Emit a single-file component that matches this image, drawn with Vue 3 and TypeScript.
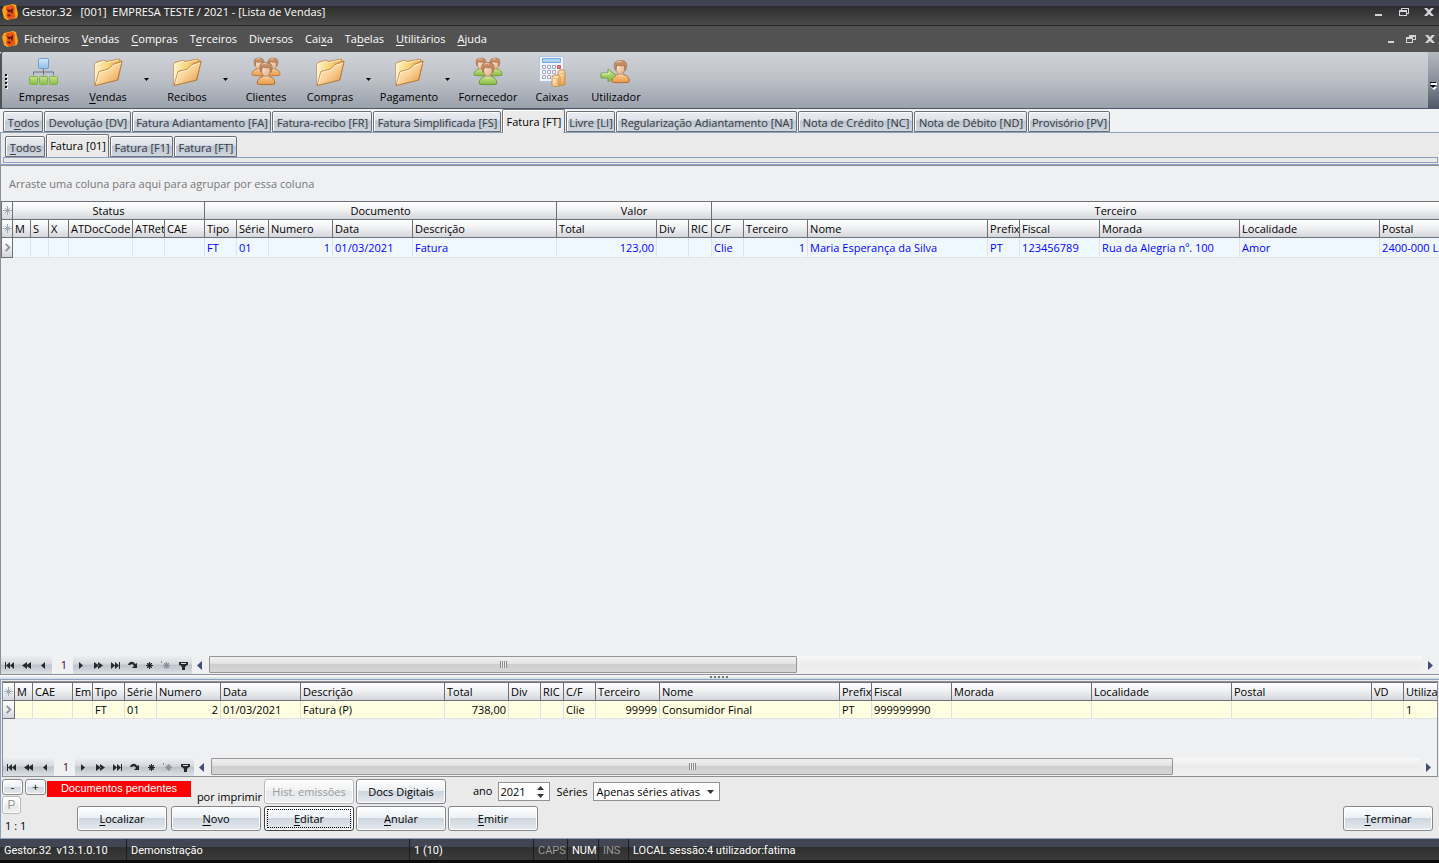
<script setup lang="ts">
import { h, ref } from 'vue'

/* Label whose "&" marks the accelerator letter, shown underlined. */
const Label = (props: { text: string }) => {
  const at = props.text.indexOf('&')
  if (at < 0) return h('span', props.text)
  return h('span', [props.text.slice(0, at), h('u', props.text[at + 1]), props.text.slice(at + 2)])
}
Label.props = ['text']

interface Tab { text: string; width: number; active?: boolean }
interface Column { title: string; width: number; value?: string; right?: boolean }
interface Tool { text: string; icon: string; menu?: boolean; tone?: string }

const menus = ['Ficheiros', '&Vendas', '&Compras', 'T&erceiros', 'Diversos', 'Cai&xa', 'Ta&belas', '&Utilitários', '&Ajuda']

const tools: Tool[] = [
  { text: 'Empresas', icon: 'org' },
  { text: '&Vendas', icon: 'folder', menu: true },
  { text: 'Recibos', icon: 'folder', menu: true },
  { text: 'Clientes', icon: 'people', tone: 'amber' },
  { text: 'Compras', icon: 'folder', menu: true },
  { text: 'Pagamento', icon: 'folder', menu: true },
  { text: 'Fornecedor', icon: 'people', tone: 'green' },
  { text: 'Caixas', icon: 'cash' },
  { text: 'Utilizador', icon: 'user' },
]

const typeTabs: Tab[] = [
  { text: 'T&odos', width: 40 },
  { text: 'Devolução [DV]', width: 87 },
  { text: 'Fatura Adiantamento [FA]', width: 139 },
  { text: 'Fatura-recibo [FR]', width: 100 },
  { text: 'Fatura Simplificada [FS]', width: 128 },
  { text: 'Fatura [FT]', width: 63, active: true },
  { text: 'Livre [LI]', width: 49 },
  { text: 'Regularização Adiantamento [NA]', width: 181 },
  { text: 'Nota de Crédito [NC]', width: 115 },
  { text: 'Nota de Débito [ND]', width: 113 },
  { text: 'Provisório [PV]', width: 82 },
]

const seriesTabs: Tab[] = [
  { text: '&Todos', width: 40 },
  { text: 'Fatura [01]', width: 63, active: true },
  { text: 'Fatura [F1]', width: 63 },
  { text: 'Fatura [FT]', width: 63 },
]

const bands = [
  { title: 'Status', span: 6 },
  { title: 'Documento', span: 5 },
  { title: 'Valor', span: 3 },
  { title: 'Terceiro', span: 8 },
]

const salesColumns: Column[] = [
  { title: 'M', width: 18 },
  { title: 'S', width: 18 },
  { title: 'X', width: 20 },
  { title: 'ATDocCode', width: 64 },
  { title: 'ATRet', width: 32 },
  { title: 'CAE', width: 40 },
  { title: 'Tipo', width: 32, value: 'FT' },
  { title: 'Série', width: 32, value: '01' },
  { title: 'Numero', width: 64, value: '1', right: true },
  { title: 'Data', width: 80, value: '01/03/2021' },
  { title: 'Descrição', width: 144, value: 'Fatura' },
  { title: 'Total', width: 100, value: '123,00', right: true },
  { title: 'Div', width: 32 },
  { title: 'RIC', width: 23 },
  { title: 'C/F', width: 32, value: 'Clie' },
  { title: 'Terceiro', width: 64, value: '1', right: true },
  { title: 'Nome', width: 180, value: 'Maria Esperança da Silva' },
  { title: 'Prefix', width: 32, value: 'PT' },
  { title: 'Fiscal', width: 80, value: '123456789' },
  { title: 'Morada', width: 140, value: 'Rua da Alegria nº. 100' },
  { title: 'Localidade', width: 140, value: 'Amor' },
  { title: 'Postal', width: 140, value: '2400-000 Leiria' },
]

const pendingColumns: Column[] = [
  { title: 'M', width: 18 },
  { title: 'CAE', width: 40 },
  { title: 'Em', width: 20 },
  { title: 'Tipo', width: 32, value: 'FT' },
  { title: 'Série', width: 32, value: '01' },
  { title: 'Numero', width: 64, value: '2', right: true },
  { title: 'Data', width: 80, value: '01/03/2021' },
  { title: 'Descrição', width: 144, value: 'Fatura (P)' },
  { title: 'Total', width: 64, value: '738,00', right: true },
  { title: 'Div', width: 32 },
  { title: 'RIC', width: 23 },
  { title: 'C/F', width: 32, value: 'Clie' },
  { title: 'Terceiro', width: 64, value: '99999', right: true },
  { title: 'Nome', width: 180, value: 'Consumidor Final' },
  { title: 'Prefix', width: 32, value: 'PT' },
  { title: 'Fiscal', width: 80, value: '999999990' },
  { title: 'Morada', width: 140 },
  { title: 'Localidade', width: 140 },
  { title: 'Postal', width: 140 },
  { title: 'VD', width: 32 },
  { title: 'Utiliza', width: 64, value: '1' },
]

const sum = (cols: Column[]) => cols.reduce((t, c) => t + c.width, 12)

/* Navigator glyphs on a 17 x 17 grid. */
const star = 'M8 5h1v2l1-1h1v1l-1 1h2v1h-2l1 1v1h-1l-1-1v2H8v-2l-1 1H6v-1l1-1H5V8h2L6 7V6h1l1 1z'
const navBefore = [
  { name: 'Primeiro', d: 'M4 5h1v7H4z M9 5v7L5 8.500z M13 5v7L9 8.500z' },
  { name: 'Página anterior', d: 'M9 5v7L4 8.500z M13 5v7L8 8.500z' },
  { name: 'Anterior', d: 'M10 5v7L6 8.500z' },
]
const navAfter = [
  { name: 'Seguinte', d: 'M6 5v7l4-3.500z' },
  { name: 'Página seguinte', d: 'M4 5v7l5-3.500z M8 5v7l5-3.500z' },
  { name: 'Último', d: 'M4 5v7l4-3.500z M8 5v7l4-3.500z M12 5h1v7h-1z' },
  { name: 'Atualizar', d: 'M4 8c1-4 6-4 7-1l2-1v5H8l2-2c-1-2-3-2-4-1z' },
  { name: 'Inserir', d: star },
  { name: 'Marcador', d: star + ' M3 4h1v2H3z', off: true },
  { name: 'Filtro', d: 'M4 5h9v3h-1l-2 2v3H7v-3L5 8H4z M6 6v1h5V6z' },
]

const navigators = {
  sales: { share: 48.5 },
  pending: { share: 79.6 },
}

const year = ref('2021')
const series = ref('Apenas séries ativas')
</script>

<template>
  <div class="app">
    <svg class="defs" aria-hidden="true">
      <defs>
        <linearGradient id="gFold" x1="0" y1="0" x2="1" y2="1"><stop offset="0" stop-color="#fff0cc" /><stop offset="0.500" stop-color="#fad296" /><stop offset="1" stop-color="#e0933f" /></linearGradient>
        <linearGradient id="gBack" x1="0" y1="0" x2="1" y2="0"><stop offset="0" stop-color="#fff3cf" /><stop offset="0.500" stop-color="#fbd372" /><stop offset="1" stop-color="#dd9a50" /></linearGradient>
        <linearGradient id="gAmber" x1="0" y1="0" x2="0" y2="1"><stop offset="0" stop-color="#fbc98c" /><stop offset="1" stop-color="#e79a4a" /></linearGradient>
        <linearGradient id="gGreen" x1="0" y1="0" x2="0" y2="1"><stop offset="0" stop-color="#c9e48c" /><stop offset="1" stop-color="#86bb45" /></linearGradient>
        <linearGradient id="gBlue" x1="0" y1="0" x2="0" y2="1"><stop offset="0" stop-color="#cfe9fb" /><stop offset="1" stop-color="#8fbfe8" /></linearGradient>
        <linearGradient id="gFace" x1="0" y1="0" x2="1" y2="1"><stop offset="0" stop-color="#fff0e2" /><stop offset="1" stop-color="#e0a67a" /></linearGradient>
        <g id="logo">
          <path d="M2 2 11 0l3 1 2 9-1 4-10 2-3-2L0 6z" fill="#f9a51a" />
          <path d="M5 2l6-1 2 3-.5 4 1 5-3.500 2-4 0-2-3 1-4-1.500-4z" fill="#ea5414" />
          <path d="M5 5l3 1 3-2-.5 6-1-.5-.5-2-2 1-1-1z" fill="#5c1a10" />
          <path d="M5 11l3-1 1 2-2 1z" fill="#7a2412" />
        </g>
        <g id="person">
          <path d="M-7 15c0-4 2-5 5-6h4c3 1 5 2 5 6 0 1-14 1-14 0z" stroke-width=".8" />
          <path d="M-2 9 0 11 2 9V7h-4z" fill="#f3cfb0" stroke="none" />
          <ellipse cx="0" cy="4.500" rx="3.500" ry="4.500" fill="url(#gFace)" stroke="#b07c55" stroke-width=".7" />
          <path d="M-4 6c-2-5-1-8 4-8s6 3 4 8l-1-4c-2 .5-4 .5-6-.5z" fill="#c48d66" stroke="#9b6845" stroke-width=".5" />
          <path d="M-3-.5c1-1 3-1 4 0" fill="none" stroke="#e9bf9d" />
        </g>
      </defs>
    </svg>

    <header class="title">
      <svg class="logo" viewBox="0 0 16 16"><use href="#logo" /></svg>
      <h1>Gestor.32&nbsp;&nbsp; [001]&nbsp; EMPRESA TESTE / 2021 - [Lista de Vendas]</h1>
      <div class="window-buttons">
        <button type="button" aria-label="Minimizar"><svg viewBox="0 0 10 10"><path d="M1 7h7v2H1z" /></svg></button>
        <button type="button" aria-label="Restaurar"><svg viewBox="0 0 10 10"><path d="M2 1h8v6H8v2H0V3h2zM3 2v1h5v3h1V2zM1 5v3h6V5z" fill-rule="evenodd" /></svg></button>
        <button type="button" aria-label="Fechar"><svg viewBox="0 0 10 10"><path d="M0 1h3l2 2 2-2h3L6.500 5 10 9H7L5 7 3 9H0l3.500-4z" /></svg></button>
      </div>
    </header>

    <nav class="menu">
      <svg class="logo" viewBox="0 0 16 16"><use href="#logo" /></svg>
      <button v-for="m in menus" :key="m" type="button"><Label :text="m" /></button>
      <div class="window-buttons child">
        <button type="button" aria-label="Minimizar documento"><svg viewBox="0 0 10 10"><path d="M1 7h6v2H1z" /></svg></button>
        <button type="button" aria-label="Restaurar documento"><svg viewBox="0 0 10 10"><path d="M3 1h7v5H7v3H0V3h3zM4 3h3v2h2V3zM1 5v3h5V5z" fill-rule="evenodd" /></svg></button>
        <button type="button" aria-label="Fechar documento"><svg viewBox="0 0 10 10"><path d="M0 1h3l2 2 2-2h3L6.500 5 10 9H7L5 7 3 9H0l3.500-4z" /></svg></button>
      </div>
    </nav>

    <div class="toolbar">
      <i class="grip" />
      <template v-for="t in tools" :key="t.text">
        <button type="button" class="tool">
          <svg v-if="t.icon === 'org'" viewBox="0 0 32 32">
            <path d="M15.500 13v6M5.500 19v-3h20v3" fill="none" stroke="#6b7389" />
            <rect x="10.500" y="2.500" width="10" height="10" rx="1" fill="url(#gBlue)" stroke="#6f9fd0" />
            <rect x="1.500" y="20.500" width="8" height="8" rx="1" fill="url(#gGreen)" stroke="#84b04a" />
            <rect x="11.500" y="20.500" width="8" height="8" rx="1" fill="url(#gGreen)" stroke="#84b04a" />
            <rect x="21.500" y="20.500" width="8" height="8" rx="1" fill="url(#gGreen)" stroke="#84b04a" />
          </svg>
          <svg v-else-if="t.icon === 'folder'" viewBox="0 0 32 32" stroke-width=".8" stroke-linejoin="round">
            <path d="M3 29.500 2.500 8 4 6.500 12 4l2 1.500L27 3l1 2 2 0-4 19z" fill="url(#gBack)" stroke="#b98043" />
            <path d="M3.500 27 3.300 9 12 5l1.500 2L27 4" fill="none" stroke="#fff6dc" />
            <path d="M3 29.500 7 15.500 16.500 13 21 8.500 30 5.500 25.500 24z" fill="url(#gFold)" stroke="#b5742e" />
            <path d="M4.500 27.500 7.700 16.500 17 14l4.500-4.500L29 7" fill="none" stroke="#fff5da" />
          </svg>
          <svg v-else-if="t.icon === 'people'" viewBox="0 0 32 32" :class="t.tone">
            <use href="#person" transform="translate(9 4)" /><use href="#person" transform="translate(23 4)" /><use href="#person" transform="translate(16 9) scale(1.250)" />
          </svg>
          <svg v-else-if="t.icon === 'cash'" viewBox="0 0 32 32">
            <path d="M3.500.5h24v25h-24z" fill="#f1f4fb" stroke="#b4c4e2" />
            <path d="M6.500 2.500h18v4h-18z" fill="#a9d4f1" stroke="#76a9d8" />
            <g fill="#fff" stroke="#a1aac8">
              <path v-for="n in 9" :key="n" :d="`M${6.5 + ((n - 1) % 3) * 5} ${9.5 + Math.floor((n - 1) / 3) * 5}h3v3h-3z`" />
            </g>
            <path d="M21.500 9.500h3v3h-3z" fill="#f07b72" stroke="#c75b55" />
            <g fill="url(#gFold)" stroke="#b98142" stroke-width=".8"><path d="M22 16c0-3 7-3 7 0v12c0 2-7 2-7 0zM16 21c0-3 8-3 8 0v8c0 2-8 2-8 0z" /></g>
            <g fill="#fce1b5" stroke="#c89350" stroke-width=".5"><ellipse cx="25.500" cy="16" rx="3" ry="1.500" /><ellipse cx="20" cy="21" rx="3.500" ry="1.500" /></g>
          </svg>
          <svg v-else viewBox="0 0 32 32" class="amber">
            <use href="#person" transform="translate(20.500 7) scale(1.250)" />
            <path d="M1 17h7v-4l8 6.500-8 6.500v-4H1z" fill="url(#gGreen)" stroke="#649a35" stroke-width=".8" />
            <path d="M2 18h7v-2.500" fill="none" stroke="#e4f5bf" />
          </svg>
          <Label :text="t.text" />
        </button>
        <button v-if="t.menu" type="button" class="drop" :aria-label="t.text.replace('&', '') + ' opções'"><i /></button>
      </template>
      <button type="button" class="more" aria-label="Mais botões"><svg viewBox="0 0 7 8"><path d="M1 1h6v2H1zM1 5h6L4 8z" fill="#fff" /><path d="M0 0h6v1H0zM0 3h6L3 6z" /></svg></button>
    </div>

    <div class="tabs types" role="tablist">
      <button v-for="t in typeTabs" :key="t.text" type="button" role="tab" :aria-selected="!!t.active" :class="{ active: t.active }" :style="{ width: t.width + 'px' }"><Label :text="t.text" /></button>
    </div>
    <div class="series-pane">
      <div class="tabs" role="tablist">
        <button v-for="t in seriesTabs" :key="t.text" type="button" role="tab" :aria-selected="!!t.active" :class="{ active: t.active }" :style="{ width: t.width + 'px' }"><Label :text="t.text" /></button>
      </div>
      <div class="strip" />
    </div>

    <main class="sales">
      <p class="group-hint">Arraste uma coluna para aqui para agrupar por essa coluna</p>
      <div class="grid">
        <table :style="{ width: sum(salesColumns) + 'px' }">
          <colgroup><col class="ind" /><col v-for="c in salesColumns" :key="c.title" :style="{ width: c.width + 'px' }" /></colgroup>
          <thead>
            <tr><th class="mark"><svg viewBox="0 0 10 10"><path d="M5 0v10M0 5h10M2 2l6 6M8 2 2 8" /></svg></th><th v-for="b in bands" :key="b.title" class="band" :colspan="b.span">{{ b.title }}</th></tr>
            <tr><th class="mark"><svg viewBox="0 0 10 10"><path d="M5 0v10M0 5h10M2 2l6 6M8 2 2 8" /></svg></th><th v-for="c in salesColumns" :key="c.title">{{ c.title }}</th></tr>
          </thead>
          <tbody>
            <tr><th class="mark row"><svg viewBox="0 0 10 10"><path class="chev" d="m3 1 4 4-4 4" /></svg></th><td v-for="c in salesColumns" :key="c.title" :class="{ right: c.right }">{{ c.value }}</td></tr>
          </tbody>
        </table>
      </div>
      <div class="navigator">
        <div class="nav-buttons">
          <button v-for="n in navBefore" :key="n.name" type="button" :aria-label="n.name"><svg viewBox="0 0 17 17"><path :d="n.d" /></svg></button>
          <span class="count">1</span>
          <button v-for="n in navAfter" :key="n.name" type="button" :aria-label="n.name" :class="{ off: n.off }"><svg viewBox="0 0 17 17"><path :d="n.d" fill-rule="evenodd" /></svg></button>
        </div>
        <button type="button" class="arrow" aria-label="Esquerda"><svg viewBox="0 0 17 17"><path d="M10 4v9L5 8.500z" /></svg></button>
        <div class="track"><div class="thumb" :style="{ width: navigators.sales.share + '%' }"><i /></div></div>
        <button type="button" class="arrow" aria-label="Direita"><svg viewBox="0 0 17 17"><path d="M6 4v9l5-4.500z" /></svg></button>
      </div>
    </main>

    <div class="splitter"><i /></div>

    <section class="lower">
      <div class="pending">
        <div class="grid">
          <table :style="{ width: sum(pendingColumns) + 'px' }">
            <colgroup><col class="ind" /><col v-for="c in pendingColumns" :key="c.title" :style="{ width: c.width + 'px' }" /></colgroup>
            <thead>
              <tr><th class="mark"><svg viewBox="0 0 10 10"><path d="M5 0v10M0 5h10M2 2l6 6M8 2 2 8" /></svg></th><th v-for="c in pendingColumns" :key="c.title">{{ c.title }}</th></tr>
            </thead>
            <tbody>
              <tr><th class="mark row"><svg viewBox="0 0 10 10"><path class="chev" d="m3 1 4 4-4 4" /></svg></th><td v-for="c in pendingColumns" :key="c.title" :class="{ right: c.right }">{{ c.value }}</td></tr>
            </tbody>
          </table>
        </div>
        <div class="navigator">
          <div class="nav-buttons">
            <button v-for="n in navBefore" :key="n.name" type="button" :aria-label="n.name"><svg viewBox="0 0 17 17"><path :d="n.d" /></svg></button>
            <span class="count">1</span>
            <button v-for="n in navAfter" :key="n.name" type="button" :aria-label="n.name" :class="{ off: n.off }"><svg viewBox="0 0 17 17"><path :d="n.d" fill-rule="evenodd" /></svg></button>
          </div>
          <button type="button" class="arrow" aria-label="Esquerda"><svg viewBox="0 0 17 17"><path d="M10 4v9L5 8.500z" /></svg></button>
          <div class="track"><div class="thumb" :style="{ width: navigators.pending.share + '%' }"><i /></div></div>
          <button type="button" class="arrow" aria-label="Direita"><svg viewBox="0 0 17 17"><path d="M6 4v9l5-4.500z" /></svg></button>
        </div>
      </div>

      <div class="controls">
        <div class="zoom">
          <div class="pair"><button type="button" class="btn mini">-</button><button type="button" class="btn mini">+</button></div>
          <button type="button" class="btn print" disabled>P</button>
          <span class="ratio">1 : 1</span>
        </div>
        <div class="actions">
          <div class="line">
            <strong class="alert">Documentos pendentes</strong>
            <span class="hint">por imprimir</span>
            <button type="button" class="btn" disabled>Hist. emissões</button>
            <button type="button" class="btn">Docs Digitais</button>
            <label class="year-label" for="year">ano</label>
            <div class="spin">
              <input id="year" v-model="year" type="text" />
              <svg viewBox="0 0 7 12"><path d="M0 4h7L3.500 0zM0 8h7l-3.500 4z" /></svg>
            </div>
            <label class="series-label" for="series">Séries</label>
            <div class="combo">
              <select id="series" v-model="series"><option>Apenas séries ativas</option></select>
              <svg viewBox="0 0 7 4"><path d="M0 0h7L3.500 4z" /></svg>
            </div>
          </div>
          <div class="line second">
            <button type="button" class="btn"><Label text="&Localizar" /></button>
            <button type="button" class="btn novo"><Label text="&Novo" /></button>
            <button type="button" class="btn focus"><Label text="&Editar" /></button>
            <button type="button" class="btn"><Label text="&Anular" /></button>
            <button type="button" class="btn"><Label text="&Emitir" /></button>
            <button type="button" class="btn end"><Label text="&Terminar" /></button>
          </div>
        </div>
      </div>
    </section>

    <footer class="status">
      <span class="s-app">Gestor.32&nbsp; v13.1.0.10</span>
      <span class="s-mode">Demonstração</span>
      <span class="s-count">1 (10)</span>
      <span class="s-caps dim">CAPS</span>
      <span class="s-num">NUM</span>
      <span class="s-ins dim">INS</span>
      <span class="s-user">LOCAL sessão:4 utilizador:fatima</span>
    </footer>
  </div>
</template>

<style>
html, body { margin: 0; height: 100%; }
</style>

<style scoped>
* { box-sizing: border-box; }
.app { height: 100vh; display: flex; flex-direction: column; overflow: hidden; background: #eff0f2; color: #000; font: 11px/16px "Open Sans", "Noto Sans", sans-serif; }
button, input, select { font: inherit; color: inherit; margin: 0; padding: 0; border: 0; background: none; border-radius: 0; outline: 0; white-space: nowrap; }
svg { display: block; }
.defs { position: absolute; width: 0; height: 0; }
.app :deep(u) { text-underline-offset: 2px; }

.title { height: 26px; flex: none; display: flex; align-items: center; padding: 0 5px 2px 2px; background: linear-gradient(#404452 0 6px, #2d2d2d 6px, #4a4a4a 25px, #262626 25px); color: #fff; }
.logo { width: 16px; height: 16px; flex: none; }
h1 { margin: 0 0 0 4px; font-size: 11px; font-weight: 400; line-height: 20px; flex: 1; white-space: nowrap; }
.window-buttons { display: flex; gap: 15px; margin-left: auto; }
.window-buttons svg { width: 10px; height: 10px; fill: #d2d5da; }
.child { gap: 9px; }
.menu { height: 26px; flex: none; display: flex; align-items: center; gap: 12px; padding: 0 4px 0 2px; background: #525252; color: #fff; }
.menu .logo { margin-right: -6px; }

.toolbar { height: 57px; flex: none; display: flex; margin-left: 2px; padding-left: 3px; background: linear-gradient(#cfd2d7, #bfc3c9 45%, #9aa1ab); border-bottom: 1px solid #4e5665; border-radius: 3px 0 0 0; box-shadow: -2px 0 #525252; }
.grip { width: 7px; margin-top: 22px; height: 15px; background: repeating-linear-gradient(#111 0 2px, transparent 2px 4px) 0 0 / 2px 15px no-repeat, repeating-linear-gradient(#fff 0 2px, transparent 2px 4px) 1px 1px / 2px 15px no-repeat; }
.tool { width: 64px; display: flex; flex-direction: column; align-items: center; padding-top: 4px; line-height: 18px; }
.tool svg { width: 32px; height: 32px; overflow: visible; }
.amber { fill: url(#gAmber); stroke: #b06e33; }
.green { fill: url(#gGreen); stroke: #6a9638; }
.drop { width: 15px; display: flex; justify-content: center; align-items: flex-start; padding: 26px 2px 0 0; }
.drop i { width: 5px; height: 3px; background: #000; clip-path: polygon(0 0, 100% 0, 50% 100%); }
.more { width: 11px; margin-left: auto; padding: 0 2px; background: linear-gradient(#b4b8bf, #8a919c 50%, #50586a); }
.more svg { width: 7px; height: 8px; margin-top: 12px; }

.tabs { display: flex; align-items: flex-end; gap: 1px; }
.types { height: 24px; flex: none; padding-left: 3px; border-bottom: 1px solid #8ba0bf; background: #f1f2f4; }
.tabs button { flex: none; height: 21px; padding: 2px 0 0 1px; text-align: center; color: #3c3f46; border: 1px solid #6d6f74; border-radius: 2px 2px 0 0; box-shadow: inset 1px 1px #fff; text-shadow: 0 0 1px #a8a8a8; background: linear-gradient(#e9edf2, #dfe4ea 40%, #bcc7d4 50%, #cfd7e0); }
.tabs .active { height: 23px; padding-top: 0; color: #000; text-shadow: none; background: #eaeaea; border-bottom: 0; }
.types .active { margin-bottom: -1px; height: 24px; }
.series-pane { flex: none; height: 32px; padding: 1px 1px 1px 2px; background: #eaeaea; border-left: 1px solid #8ba0bf; border-bottom: 1px solid #8ba0bf; }
.series-pane .tabs { height: 23px; padding-left: 2px; }
.strip { height: 6px; border: 1px solid #8ba0bf; }

.sales { flex: 1; min-height: 0; display: flex; flex-direction: column; border: 1px solid #8d8f94; border-right: 0; }
.group-hint { margin: 0; height: 35px; padding: 10px 8px 0; color: #767676; }
.grid { flex: 1; min-height: 0; overflow: hidden; }
table { table-layout: fixed; border-collapse: separate; border-spacing: 0; border-top: 1px solid #6d7076; }
.ind { width: 12px; }
th, td { height: 18px; padding: 0 2px; line-height: 17px; font-weight: 400; text-align: left; white-space: nowrap; overflow: hidden; text-overflow: clip; }
th { border-right: 1px solid #6d7076; border-bottom: 1px solid #6d7076; background: linear-gradient(#fff, #eeeff1 50%, #d3d6db); }
.band { text-align: center; }
.mark { padding: 0; border-left: 1px solid #6d7076; }
.mark svg { width: 9px; height: 9px; margin: 0 auto; fill: none; stroke: #99a1ab; stroke-width: 1px; }
.mark .chev { stroke: #8a929c; stroke-width: 2px; }
td { border-right: 1px solid #dfe3e6; border-bottom: 1px solid #dfe3e6; background: #f0f8ff; color: #00f; }
.sales tbody td, .sales tbody th { height: 20px; }
.right { text-align: right; }

.navigator { height: 18px; flex: none; display: flex; }
.nav-buttons { display: flex; background: linear-gradient(#eceef0, #d5d9de 45%, #bcc3cb 50%, #dde1e5); }
.nav-buttons button, .arrow { width: 17px; flex: none; }
.nav-buttons svg, .arrow svg { width: 17px; height: 17px; fill: #25282d; }
.nav-buttons .off svg { fill: #8c9097; }
.count { width: 21px; padding-left: 3px; text-align: center; background: #f0f1f3; line-height: 17px; color: #400040; }
.arrow svg { fill: #3f4d78; }
.track { flex: 1; display: flex; background: linear-gradient(#f8f8f8, #ececec 45%, #f1f1f1); }
.thumb { height: 17px; border: 1px solid #969696; border-radius: 1px; display: flex; align-items: center; justify-content: center; background: linear-gradient(#f2f2f2, #e2e2e2 45%, #cecece 50%, #d6d6d6); }
.thumb i { width: 7px; height: 7px; background: repeating-linear-gradient(90deg, #8a8a8a 0 1px, #eee 1px 2px); }

.splitter { height: 4px; flex: none; display: flex; justify-content: center; background: linear-gradient(#fff, #d3d9df); }
.splitter i { width: 20px; height: 2px; margin-top: 1px; background: repeating-linear-gradient(90deg, #70757b 0 2px, transparent 2px 4px); }

.lower { flex: none; border: 1px solid #8ba0bf; border-right: 0; background: #eaeaea; }
.pending { height: 96px; margin: 1px 1px 0; display: flex; flex-direction: column; background: #eff0f2; border: 1px solid #8d8f94; }
.pending td { background: #ffffe1; color: #000; }
.pending td, .pending th { height: 18px; }
.pending .mark { border-left: 0; }

.controls { display: flex; height: 61px; padding: 2px 6px 0 1px; }
.zoom { width: 45px; display: flex; flex-direction: column; align-items: flex-start; }
.pair { display: flex; gap: 2px; }
.btn { width: 90px; height: 25px; flex: none; border: 1px solid #85878a; border-radius: 3px; box-shadow: inset 0 0 0 1px #fff; background: linear-gradient(#fefefe, #edf0f3 48%, #cdd6df 50%, #e6eaee); }
.btn:disabled { color: #9a9a9a; border-color: #b6b8ba; background: linear-gradient(#fdfdfd, #f1f2f3 48%, #e6e9ec 50%, #eeeff1); }
.mini { width: 21px; height: 16px; line-height: 12px; }
.print { width: 19px; height: 18px; margin-top: 1px; font: 12px/14px "Liberation Sans", sans-serif; }
.ratio { padding: 5px 0 0 3px; line-height: 14px; }
.actions { flex: 1; }
.line { display: flex; height: 27px; gap: 2px; }
.alert { width: 144px; height: 16px; margin-top: 2px; background: #f00; color: #fff; text-align: center; font: 11px/15px "Liberation Sans", sans-serif; }
.hint { width: 69px; padding-top: 10px; text-align: right; white-space: nowrap; }
.year-label { padding: 4px 4px 0 25px; }
.spin, .combo { display: flex; align-items: center; height: 19px; margin-top: 3px; border: 1px solid #8f9194; background: #fff; }
.spin { width: 52px; padding-right: 5px; }
.spin input { width: 34px; flex: 1; padding-left: 1px; min-width: 0; }
.spin svg { width: 7px; height: 12px; fill: #333; }
.series-label { width: 38px; padding: 5px 0 0 4px; }
.combo { display: grid; grid-template-columns: 1fr; width: 127px; margin-left: 1px; }
.combo select { grid-area: 1 / 1; appearance: none; padding-left: 2px; height: 17px; }
.combo svg { grid-area: 1 / 1; justify-self: end; margin-right: 5px; width: 7px; height: 4px; fill: #333; pointer-events: none; }
.second { padding-left: 30px; }
.second .novo { margin: 0 1px 0 2px; }
.focus { border-color: #444; outline: 1px dotted #000; outline-offset: -4px; }
.end { margin-left: auto; }

.status { height: 24px; flex: none; display: flex; line-height: 23px; color: #fff; font-family: Roboto, "Open Sans", sans-serif; white-space: nowrap; background: linear-gradient(#424653 0 8px, #2e302f 8px, #3b3b3b 21px, #0b0b0b 21px); }
.status span { height: 21px; padding-left: 4px; border-left: 1px solid #1d1d1f; }
.status .s-app { width: 126px; border-left: 0; }
.s-mode { width: 283px; }
.s-count { width: 124px; }
.s-caps { width: 34px; }
.s-num { width: 31px; }
.s-ins { width: 30px; }
.s-user { flex: 1; }
.status .dim { color: #9a9a9a; }
</style>
